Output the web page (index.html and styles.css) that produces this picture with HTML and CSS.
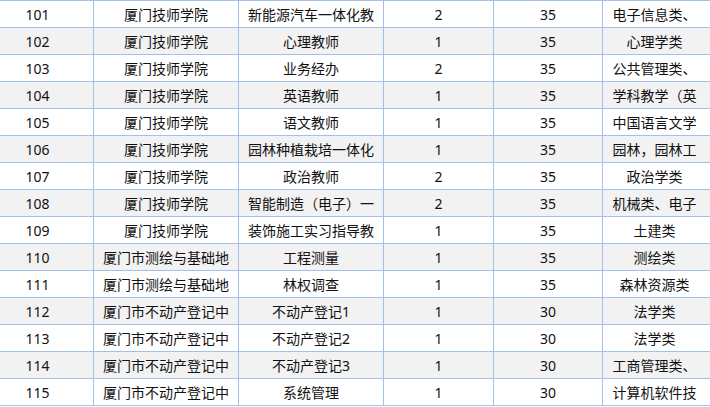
FILE: index.html
```html
<!DOCTYPE html>
<html lang="zh-CN">
<head>
<meta charset="utf-8">
<title>岗位表</title>
<link rel="stylesheet" href="styles.css">
</head>
<body>
<div class="sheet">
  <div class="row"><div class="cell">101</div><div class="cell">厦门技师学院</div><div class="cell">新能源汽车一体化教</div><div class="cell">2</div><div class="cell">35</div><div class="cell">电子信息类、</div></div>
  <div class="row alt"><div class="cell">102</div><div class="cell">厦门技师学院</div><div class="cell">心理教师</div><div class="cell">1</div><div class="cell">35</div><div class="cell">心理学类</div></div>
  <div class="row"><div class="cell">103</div><div class="cell">厦门技师学院</div><div class="cell">业务经办</div><div class="cell">2</div><div class="cell">35</div><div class="cell">公共管理类、</div></div>
  <div class="row alt"><div class="cell">104</div><div class="cell">厦门技师学院</div><div class="cell">英语教师</div><div class="cell">1</div><div class="cell">35</div><div class="cell">学科教学（英</div></div>
  <div class="row"><div class="cell">105</div><div class="cell">厦门技师学院</div><div class="cell">语文教师</div><div class="cell">1</div><div class="cell">35</div><div class="cell">中国语言文学</div></div>
  <div class="row alt"><div class="cell">106</div><div class="cell">厦门技师学院</div><div class="cell">园林种植栽培一体化</div><div class="cell">1</div><div class="cell">35</div><div class="cell">园林，园林工</div></div>
  <div class="row"><div class="cell">107</div><div class="cell">厦门技师学院</div><div class="cell">政治教师</div><div class="cell">2</div><div class="cell">35</div><div class="cell">政治学类</div></div>
  <div class="row alt"><div class="cell">108</div><div class="cell">厦门技师学院</div><div class="cell">智能制造（电子）一</div><div class="cell">2</div><div class="cell">35</div><div class="cell">机械类、电子</div></div>
  <div class="row"><div class="cell">109</div><div class="cell">厦门技师学院</div><div class="cell">装饰施工实习指导教</div><div class="cell">1</div><div class="cell">35</div><div class="cell">土建类</div></div>
  <div class="row alt"><div class="cell">110</div><div class="cell">厦门市测绘与基础地</div><div class="cell">工程测量</div><div class="cell">1</div><div class="cell">35</div><div class="cell">测绘类</div></div>
  <div class="row"><div class="cell">111</div><div class="cell">厦门市测绘与基础地</div><div class="cell">林权调查</div><div class="cell">1</div><div class="cell">35</div><div class="cell">森林资源类</div></div>
  <div class="row alt"><div class="cell">112</div><div class="cell">厦门市不动产登记中</div><div class="cell">不动产登记1</div><div class="cell">1</div><div class="cell">30</div><div class="cell">法学类</div></div>
  <div class="row"><div class="cell">113</div><div class="cell">厦门市不动产登记中</div><div class="cell">不动产登记2</div><div class="cell">1</div><div class="cell">30</div><div class="cell">法学类</div></div>
  <div class="row alt"><div class="cell">114</div><div class="cell">厦门市不动产登记中</div><div class="cell">不动产登记3</div><div class="cell">1</div><div class="cell">30</div><div class="cell">工商管理类、</div></div>
  <div class="row"><div class="cell">115</div><div class="cell">厦门市不动产登记中</div><div class="cell">系统管理</div><div class="cell">1</div><div class="cell">30</div><div class="cell">计算机软件技</div></div>
</div>
</body>
</html>
```
FILE: styles.css
```css
html, body {
  margin: 0;
  padding: 0;
  background: #ffffff;
  overflow: hidden;
}

.sheet {
  display: flex;
  flex-direction: column;
  gap: 1px;
  width: max-content;
  margin-left: -19px;
  padding: 1px 0 1px 1px;
  background: #a2c0e8;
  font-family: "Noto Sans", "Noto Sans CJK SC", sans-serif;
  font-size: 14px;
  color: #111111;
}

.row {
  display: grid;
  grid-template-columns: 111px 144px 144px 109px 108px 110px;
  column-gap: 1px;
}

.cell {
  height: 26px;
  line-height: 28px;
  text-align: center;
  white-space: nowrap;
  overflow: hidden;
  background: #ffffff;
}

.row .cell:last-child {
  padding-right: 7px;
  box-sizing: border-box;
}

.row.alt .cell {
  background: #f2f2f2;
}
```
